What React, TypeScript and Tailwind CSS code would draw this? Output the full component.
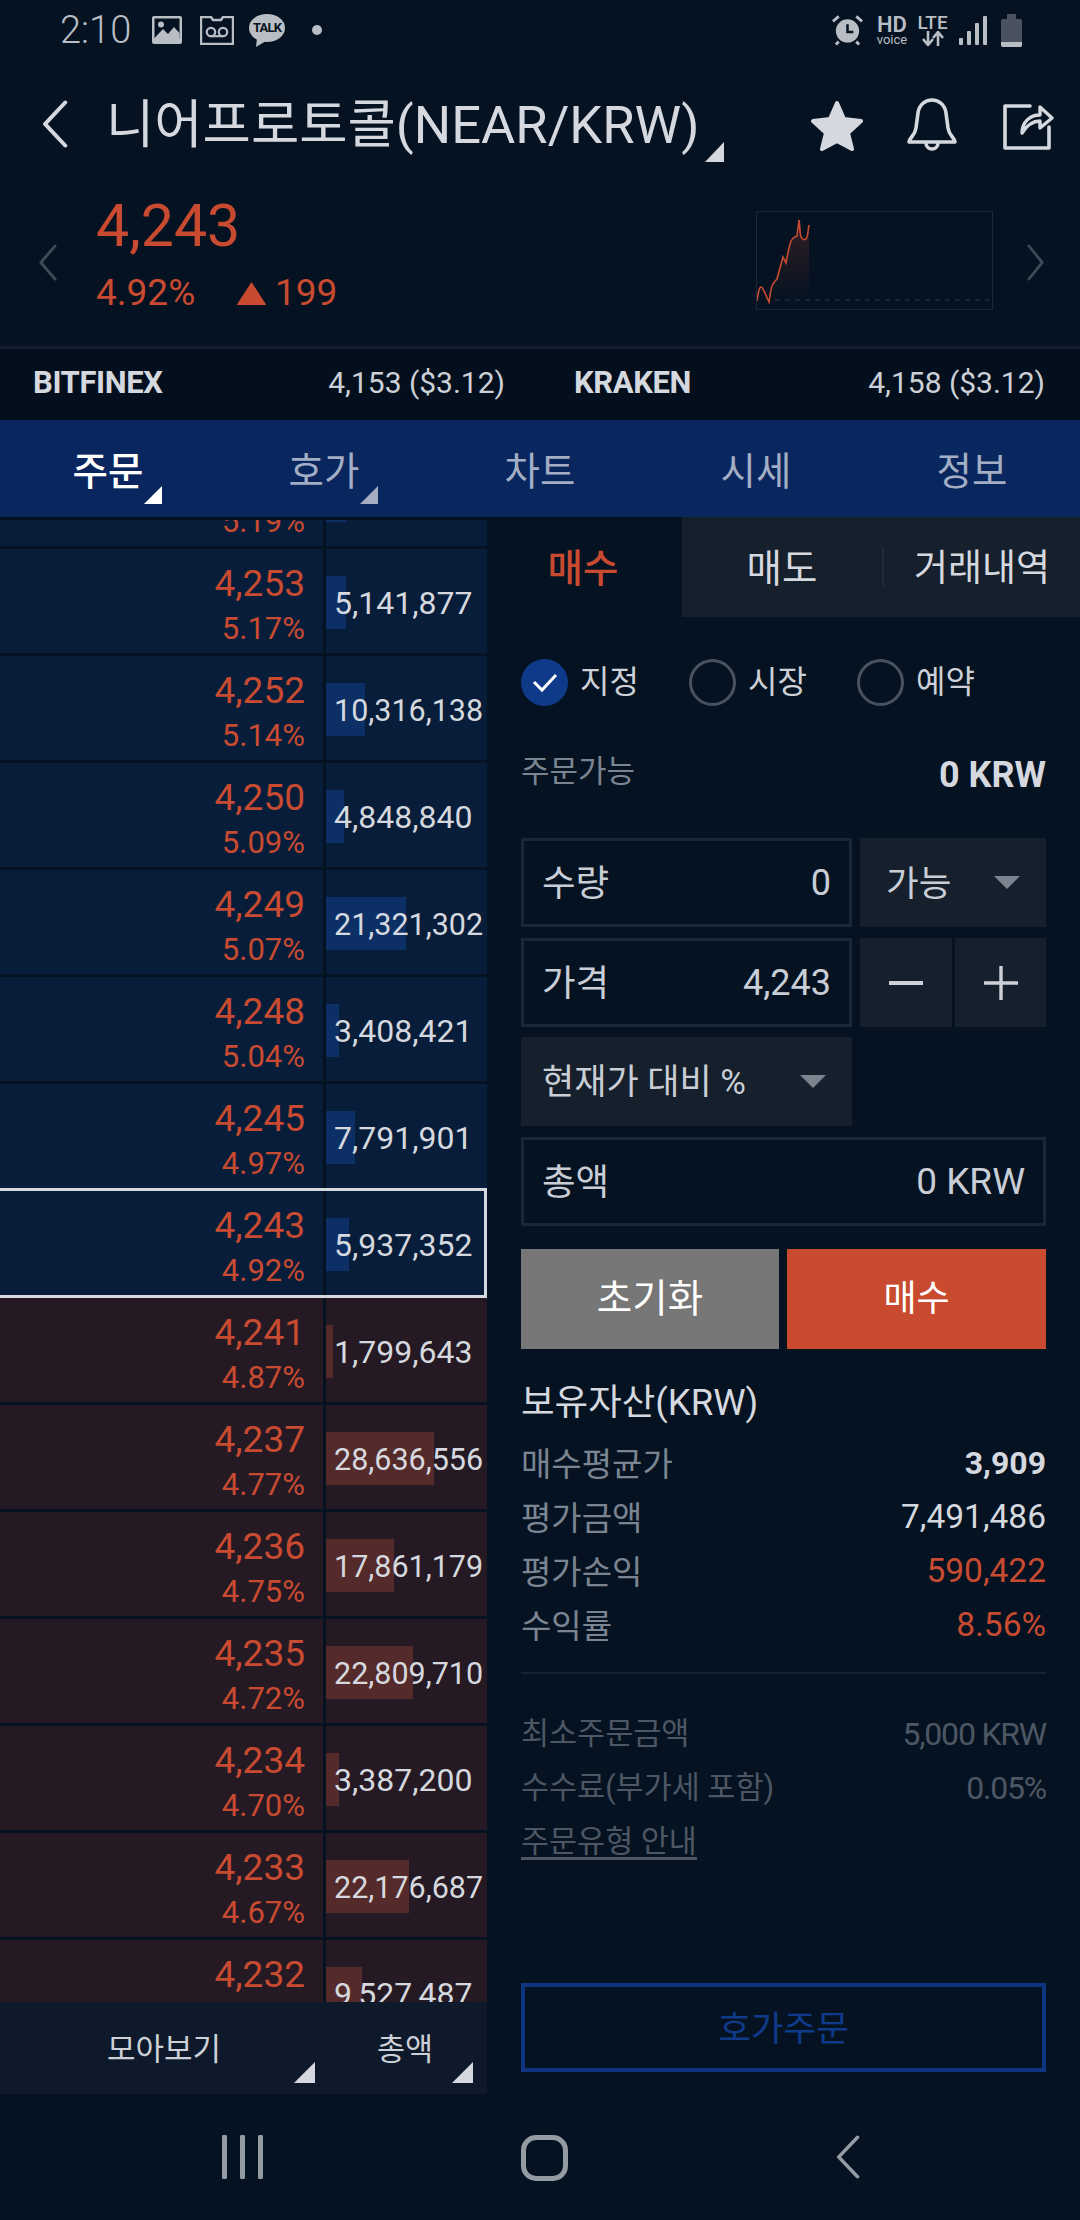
const askRows = [
  { price: '', pct: '5.19%', vol: '', bar: 20 },
  { price: '4,253', pct: '5.17%', vol: '5,141,877', bar: 20 },
  { price: '4,252', pct: '5.14%', vol: '10,316,138', bar: 39 },
  { price: '4,250', pct: '5.09%', vol: '4,848,840', bar: 18 },
  { price: '4,249', pct: '5.07%', vol: '21,321,302', bar: 80 },
  { price: '4,248', pct: '5.04%', vol: '3,408,421', bar: 13 },
  { price: '4,245', pct: '4.97%', vol: '7,791,901', bar: 29 },
  { price: '4,243', pct: '4.92%', vol: '5,937,352', bar: 23, current: true },
];

const bidRows = [
  { price: '4,241', pct: '4.87%', vol: '1,799,643', bar: 7 },
  { price: '4,237', pct: '4.77%', vol: '28,636,556', bar: 108 },
  { price: '4,236', pct: '4.75%', vol: '17,861,179', bar: 68 },
  { price: '4,235', pct: '4.72%', vol: '22,809,710', bar: 87 },
  { price: '4,234', pct: '4.70%', vol: '3,387,200', bar: 13 },
  { price: '4,233', pct: '4.67%', vol: '22,176,687', bar: 83 },
  { price: '4,232', pct: '', vol: '9,527,487', bar: 36 },
];

const tabs = ['주문', '호가', '차트', '시세', '정보'];

function Corner({ className }: { className: string }) {
  return (
    <svg viewBox="0 0 20 20" preserveAspectRatio="none" className={className}>
      <polygon points="20,0 20,20 0,20" fill="currentColor" />
    </svg>
  );
}

function Chevron({ left, className }: { left?: boolean; className: string }) {
  return (
    <svg viewBox="0 0 20 40" preserveAspectRatio="none" fill="none" className={className}>
      <path d={left ? 'M18 2 L3 20 L18 38' : 'M2 2 L17 20 L2 38'} stroke="currentColor" strokeWidth="3" strokeLinecap="round" strokeLinejoin="round" />
    </svg>
  );
}

function StatusBar() {
  return (
    <div className="flex h-[60px] items-center text-[#b9bec5]">
      <span className="ml-[60px] w-[74px] text-[38px] leading-[60px] font-light">2:10</span>
      <svg viewBox="0 0 30 28" className="ml-[18px] h-[28px] w-[30px]">
        <rect width="30" height="28" rx="2" fill="currentColor" />
        <rect x="2.5" y="2.5" width="25" height="20" fill="#051221" />
        <circle cx="9" cy="8.5" r="3" fill="currentColor" />
        <path d="M2.5 22 L11 13 L16 18 L22 11 L27.5 17 V24 H2.5 Z" fill="currentColor" />
      </svg>
      <svg viewBox="0 0 34 29" className="ml-[18px] h-[29px] w-[34px]">
        <path d="M1 1 H11 L13 4 H21 L23 1 H33 V28 H1 Z" fill="none" stroke="currentColor" strokeWidth="2.4" strokeLinejoin="round" />
        <circle cx="11" cy="16" r="4.2" fill="none" stroke="currentColor" strokeWidth="2.2" />
        <circle cx="23" cy="16" r="4.2" fill="none" stroke="currentColor" strokeWidth="2.2" />
        <path d="M11 20.2 H23" stroke="currentColor" strokeWidth="2.2" />
      </svg>
      <div className="relative ml-[15px] h-[33px] w-[36px]">
        <svg viewBox="0 0 36 33" className="h-[33px] w-[36px]">
          <ellipse cx="18" cy="14" rx="18" ry="14" fill="currentColor" />
          <path d="M8 24 L7 33 L17 27 Z" fill="currentColor" />
        </svg>
        <span className="absolute top-[6px] left-[4px] w-[28px] text-center text-[13px] leading-[16px] font-bold tracking-[-0.8px] text-[#051221]">TALK</span>
      </div>
      <div className="ml-[27px] h-[10px] w-[10px] rounded-full bg-[#b9bec5]" />
      <svg viewBox="0 0 34 32" className="ml-[509px] h-[32px] w-[33px]">
        <circle cx="17" cy="17" r="12" fill="currentColor" />
        <path d="M17 10 V18 H23" fill="none" stroke="#051221" strokeWidth="2.6" />
        <path d="M2 7 L8 2 M32 7 L26 2 M8 28 L5 31 M26 28 L29 31" stroke="currentColor" strokeWidth="3" />
      </svg>
      <div className="ml-[12px] flex w-[32px] flex-col items-center">
        <span className="h-[19px] text-[22px] leading-[19px] font-semibold">HD</span>
        <span className="h-[11px] text-[13px] leading-[11px]">voice</span>
      </div>
      <div className="ml-[10px] flex w-[29px] flex-col items-center">
        <span className="h-[17px] text-[19px] leading-[17px] font-medium">LTE</span>
        <svg viewBox="0 0 24 15" className="h-[15px] w-[24px]">
          <path d="M7 0 V13 M2 8 L7 14 L12 8 M17 15 V2 M12 7 L17 1 L22 7" fill="none" stroke="currentColor" strokeWidth="2.6" />
        </svg>
      </div>
      <div className="ml-[12px] flex h-[30px] items-end gap-[4.5px]">
        <div className="h-[7px] w-[3.5px] rounded-[1px] bg-[#b9bec5]" />
        <div className="h-[14px] w-[3.5px] rounded-[1px] bg-[#b9bec5]" />
        <div className="h-[22px] w-[3.5px] rounded-[1px] bg-[#b9bec5]" />
        <div className="h-[29px] w-[3.5px] rounded-[1px] bg-[#b9bec5]" />
      </div>
      <div className="ml-[14px] flex w-[21px] flex-col items-center">
        <div className="h-[5px] w-[9px] rounded-t-[1px] bg-[#4a5260]" />
        <div className="flex h-[28px] w-[21px] flex-col justify-end overflow-hidden rounded-[2px] bg-[#4a5260]">
          <div className="h-[5px] bg-[#b9bec5]" />
        </div>
      </div>
    </div>
  );
}

function Header() {
  return (
    <div className="flex h-[130px] items-center text-[#d5d9df]">
      <Chevron left className="mb-[3px] ml-[41px] h-[48px] w-[27px]" />
      <div className="relative ml-[38px] flex h-[60px] w-[616px] items-center">
        <span className="text-[52.5px] leading-[60px] whitespace-nowrap">니어프로토콜(NEAR/KRW)</span>
        <Corner className="absolute top-[47px] left-[599px] h-[20px] w-[19px]" />
      </div>
      <svg viewBox="0 0 54 51" className="ml-[88px] h-[51px] w-[54px]">
        <path d="M27 3 L34 19 L51 21 L38 33 L42 49 L27 41 L12 49 L16 33 L3 21 L20 19 Z" fill="currentColor" stroke="currentColor" strokeWidth="4" strokeLinejoin="round" />
      </svg>
      <svg viewBox="0 0 54 54" fill="none" className="ml-[41px] h-[54px] w-[54px]">
        <path d="M4 44 C4 40 10 38 11 30 L13 15 C14 7 20 2 27 2 C34 2 40 7 41 15 L43 30 C44 38 50 40 50 44 Z" stroke="currentColor" strokeWidth="3.6" strokeLinejoin="round" />
        <path d="M21 45 C21 53 33 53 33 45" stroke="currentColor" strokeWidth="3.6" />
      </svg>
      <svg viewBox="0 0 52 50" fill="none" className="ml-[43px] h-[50px] w-[52px]">
        <path d="M28 6 H3 V48 H47 V27" stroke="currentColor" strokeWidth="3.6" strokeLinejoin="round" strokeLinecap="round" />
        <path d="M20 33 C20 22 28 15 38 15 V7 L50 18 L38 28 V21 C31 21 25 25 20 33 Z" stroke="currentColor" strokeWidth="3.4" strokeLinejoin="round" />
      </svg>
    </div>
  );
}

function Sparkline() {
  const line = 'M0 89 C1 82 2 75 4 75 C6 75 6 78 7 79 L12 90 C13 84 14 74 16 72 C18 69 19 68 20 67 L26 45 L29 51 C30 46 32 34 34 29 C36 25 38 25 40 24 L42 8 C43 14 43 24 44 25 C46 28 48 28 49 27 C51 25 51 18 52 13';
  return (
    <div className="mt-[21px] h-[99px] w-[237px] border border-[#1c2838]">
      <svg viewBox="0 0 235 97" className="h-[97px] w-[235px]">
        <defs>
          <linearGradient id="spark" x1="0" y1="0" x2="0" y2="1">
            <stop offset="0" stopColor="#c84b31" stopOpacity="0.22" />
            <stop offset="1" stopColor="#c84b31" stopOpacity="0" />
          </linearGradient>
        </defs>
        <path d="M18 88 H234" stroke="#1f2c3d" strokeWidth="1.4" strokeDasharray="5 5" />
        <path d={`${line} V89 H0 Z`} fill="url(#spark)" />
        <path d={line} fill="none" stroke="#c84b31" strokeWidth="1.6" />
      </svg>
    </div>
  );
}

function PriceBlock() {
  return (
    <div className="flex h-[156px] text-[#c84b31]">
      <Chevron left className="mt-[54px] ml-[38px] h-[37px] w-[19px] text-[#3f4a57]" />
      <div className="ml-[39px] w-[660px]">
        <div className="mt-[6px] text-[59px] leading-[60px]">4,243</div>
        <div className="mt-[17px] flex h-[40px] items-center text-[37px] leading-[40px]">
          <span className="w-[140px]">4.92%</span>
          <svg viewBox="0 0 31 24" className="h-[23px] w-[31px]">
            <polygon points="15.5,0 31,24 0,24" fill="currentColor" />
          </svg>
          <span className="ml-[8px]">199</span>
        </div>
      </div>
      <Sparkline />
      <Chevron className="mt-[54px] ml-[34px] h-[37px] w-[18px] text-[#3f4a57]" />
    </div>
  );
}

function ExchangeRow() {
  return (
    <div className="grid h-[74px] grid-cols-2 border-t-[3px] border-[#131f2e] bg-[#040f1d] text-[30px] leading-[68px] text-[#cdd1d7]">
      <div className="flex justify-between pr-[35px] pl-[33px]">
        <span className="text-[31px] font-bold tracking-[-0.4px] text-[#d5d9df]">BITFINEX</span>
        <span>4,153 ($3.12)</span>
      </div>
      <div className="flex justify-between pr-[35px] pl-[34px]">
        <span className="text-[31px] font-bold tracking-[-0.4px] text-[#d5d9df]">KRAKEN</span>
        <span>4,158 ($3.12)</span>
      </div>
    </div>
  );
}

function NavTabs() {
  return (
    <div className="grid h-[97px] grid-cols-5 bg-[#09265e] text-[38.5px] leading-[103px] text-[#a3aec4]">
      {tabs.map((tab, i) => (
        <div key={tab} className={`relative h-[97px] text-center ${i === 0 ? 'font-medium text-white' : ''}`}>
          {tab}
          {i < 2 && <Corner className={`absolute top-[66px] left-[144px] h-[18px] w-[18px] ${i === 0 ? 'text-white' : 'text-[#a3aec4]'}`} />}
        </div>
      ))}
    </div>
  );
}

function BookRow({ row, tone }: { row: { price: string; pct: string; vol: string; bar: number; current?: boolean }; tone: 'ask' | 'bid' }) {
  const bg = tone === 'ask' ? 'bg-[#071d3a]' : 'bg-[#251a24]';
  const barBg = tone === 'ask' ? 'bg-[#0c2f66]' : 'bg-[#552a2a]';
  const wide = row.vol.length > 9;
  return (
    <div className="relative flex h-[104px] w-[487px] shrink-0 gap-[3px]">
      <div className={`w-[323px] pt-[12px] pr-[18px] text-right text-[#c84b31] ${bg}`}>
        <div className="h-[46px] text-[37px] leading-[46px]">{row.price}</div>
        <div className="h-[43px] text-[31px] leading-[43px]">{row.pct}</div>
      </div>
      <div className={`relative w-[161px] pt-[27px] ${bg}`}>
        <div className={`h-[53px] ${barBg}`} style={{ width: row.bar }} />
        <span className={`absolute top-[28px] left-[8px] leading-[53px] whitespace-nowrap text-[#d5d9df] ${wide ? 'text-[30.5px]' : 'text-[32px]'}`}>{row.vol}</span>
      </div>
      {row.current && <div className="absolute -top-[3px] right-0 -bottom-[3px] -left-[3px] border-[3px] border-[#d5d9df]" />}
    </div>
  );
}

function OrderBook() {
  return (
    <div className="flex w-[487px] flex-col">
      <div className="mt-[3px] h-[1482px] overflow-hidden">
        <div className="-mt-[78px] flex flex-col gap-[3px]">
          {askRows.map((row) => <BookRow key={row.pct} row={row} tone="ask" />)}
          {bidRows.map((row) => <BookRow key={row.price} row={row} tone="bid" />)}
        </div>
      </div>
      <div className="relative flex h-[92px] bg-[#0e1a2b] leading-[95px] text-[#cdd1d7]">
        <span className="absolute left-[107px] text-[31px]">모아보기</span>
        <Corner className="absolute top-[60px] left-[294px] h-[21px] w-[21px] text-[#d5d9df]" />
        <span className="absolute left-[377px] text-[30.5px]">총액</span>
        <Corner className="absolute top-[60px] left-[452px] h-[21px] w-[21px] text-[#d5d9df]" />
      </div>
    </div>
  );
}

function Radio({ label, on }: { label: string; on?: boolean }) {
  return (
    <div className="flex items-center gap-[12px]">
      {on ? (
        <div className="flex h-[47px] w-[47px] items-center justify-center rounded-full bg-[#0f3a8a]">
          <svg viewBox="0 0 26 20" fill="none" className="h-[20px] w-[26px]">
            <path d="M2 9 L10 17 L24 2" stroke="#ffffff" strokeWidth="3" />
          </svg>
        </div>
      ) : (
        <div className="h-[47px] w-[47px] rounded-full border-[3px] border-[#49525f]" />
      )}
      <span className="w-[54px] text-[32px] leading-[47px] whitespace-nowrap text-[#cdd1d7]">{label}</span>
    </div>
  );
}

function Caret({ className }: { className: string }) {
  return (
    <svg viewBox="0 0 26 13" className={className}>
      <polygon points="0,0 26,0 13,13" fill="#7c8490" />
    </svg>
  );
}

function InputBox({ label, value, className, valueClass }: { label: string; value: string; className: string; valueClass?: string }) {
  return (
    <div className={`flex h-[89px] items-center justify-between border-[3px] border-[#1a2738] pr-[18px] pl-[18px] text-[36px] text-[#c9ced6] ${className}`}>
      <span className="pt-[4px] text-[36.5px]">{label}</span>
      <span className={valueClass}>{value}</span>
    </div>
  );
}

function InfoRow({ label, value, valueClass, labelClass }: { label: string; value: string; valueClass: string; labelClass: string }) {
  return (
    <div className="flex h-[54px] items-center justify-between leading-[54px]">
      <span className={labelClass}>{label}</span>
      <span className={valueClass}>{value}</span>
    </div>
  );
}

function OrderPanel() {
  return (
    <div className="flex w-[593px] flex-col">
      <div className="flex h-[100px] text-[38.5px] leading-[104px]">
        <div className="w-[195px] pr-[3px] text-center font-medium text-[#c84b31]">매수</div>
        <div className="flex flex-1 bg-[#161f2c] text-[#d5d9df]">
          <span className="w-[200px] text-center">매도</span>
          <div className="mt-[30px] h-[39px] w-[2px] bg-[#212c3a]" />
          <span className="flex-1 text-center text-[37px]">거래내역</span>
        </div>
      </div>
      <div className="flex flex-col px-[34px]">
        <div className="mt-[42px] flex h-[47px] gap-[55px]">
          <Radio label="지정" on />
          <Radio label="시장" />
          <Radio label="예약" />
        </div>
        <div className="mt-[49px] flex h-[40px] items-center justify-between">
          <span className="mb-[5px] text-[31px] text-[#7b8592]">주문가능</span>
          <span className="text-[36px] font-bold text-[#d5d9df]">0 KRW</span>
        </div>
        <div className="mt-[43px] flex gap-[8px]">
          <InputBox label="수량" value="0" className="w-[331px]" />
          <div className="flex h-[89px] w-[186px] items-center justify-between bg-[#161f2c] pr-[26px] pl-[26px] text-[35.5px] text-[#c9ced6]">
            <span className="pt-[4px]">가능</span>
            <Caret className="h-[13px] w-[26px]" />
          </div>
        </div>
        <div className="mt-[11px] flex gap-[8px]">
          <InputBox label="가격" value="4,243" className="w-[331px]" />
          <div className="flex h-[89px] w-[92px] items-center justify-center bg-[#161f2c]">
            <div className="h-[4px] w-[34px] bg-[#cdd1d7]" />
          </div>
          <div className="-ml-[5px] flex h-[89px] w-[91px] items-center justify-center bg-[#161f2c]">
            <svg viewBox="0 0 34 34" className="h-[34px] w-[34px]">
              <path d="M0 17 H34 M17 0 V34" stroke="#cdd1d7" strokeWidth="3.4" />
            </svg>
          </div>
        </div>
        <div className="mt-[10px] flex h-[89px] w-[331px] items-center justify-between bg-[#161f2c] pr-[26px] pl-[21px] text-[35px] text-[#c9ced6]">
          <span className="pt-[4px]">현재가 대비 %</span>
          <Caret className="h-[13px] w-[26px]" />
        </div>
        <InputBox label="총액" value="0 KRW" valueClass="text-[37px]" className="mt-[11px] w-full" />
        <div className="mt-[23px] flex h-[100px] gap-[8px] text-[36px] leading-[100px] text-white">
          <div className="w-[258px] bg-[#777777] text-center text-[38.5px]">초기화</div>
          <div className="flex-1 bg-[#c84a2f] text-center">매수</div>
        </div>
        <div className="mt-[30px] h-[44px] text-[36.5px] leading-[47px] text-[#d5d9df]">보유자산(KRW)</div>
        <div className="mt-[13px] text-[33px]">
          <InfoRow label="매수평균가" value="3,909" labelClass="pt-[3px] text-[#7b8592]" valueClass="text-[32px] font-bold text-[#d5d9df]" />
          <InfoRow label="평가금액" value="7,491,486" labelClass="pt-[3px] text-[#7b8592]" valueClass="text-[33.5px] text-[#d5d9df]" />
          <InfoRow label="평가손익" value="590,422" labelClass="pt-[3px] text-[#7b8592]" valueClass="text-[33.5px] text-[#c84b31]" />
          <InfoRow label="수익률" value="8.56%" labelClass="pt-[3px] text-[#7b8592]" valueClass="text-[33.5px] text-[#c84b31]" />
        </div>
        <div className="mt-[20px] h-[2px] bg-[#172231]" />
        <div className="mt-[33px] text-[30.5px] text-[#4d5764]">
          <InfoRow label="최소주문금액" value="5,000 KRW" labelClass="" valueClass="text-[32px] tracking-[-1.2px]" />
          <InfoRow label="수수료(부가세 포함)" value="0.05%" labelClass="" valueClass="text-[32px] tracking-[-1.2px]" />
          <div className="h-[54px] leading-[54px] underline underline-offset-[5px]">주문유형 안내</div>
        </div>
        <div className="mt-[114px] h-[89px] border-[4px] border-[#0f3480] text-center text-[35.5px] leading-[84px] text-[#0f3a8a]">호가주문</div>
      </div>
    </div>
  );
}

function SoftKeys() {
  return (
    <div className="flex h-[126px] items-start pt-[41px] text-[#959ba3]">
      <svg viewBox="0 0 41 44" className="ml-[222px] h-[44px] w-[41px]">
        <path d="M2.5 2 V42 M20.5 2 V42 M38.5 2 V42" stroke="currentColor" strokeWidth="5" strokeLinecap="round" />
      </svg>
      <div className="ml-[258px] h-[46px] w-[47px] rounded-[15px] border-[5px] border-[#959ba3]" />
      <Chevron left className="ml-[267px] h-[44px] w-[25px]" />
    </div>
  );
}

export default function App() {
  return (
    <div className="flex h-[2220px] w-[1080px] flex-col overflow-hidden bg-[#051221] [font-family:Roboto,'Noto_Sans_CJK_KR',sans-serif]">
      <StatusBar />
      <Header />
      <PriceBlock />
      <ExchangeRow />
      <NavTabs />
      <div className="flex h-[1577px]">
        <OrderBook />
        <OrderPanel />
      </div>
      <SoftKeys />
    </div>
  );
}
